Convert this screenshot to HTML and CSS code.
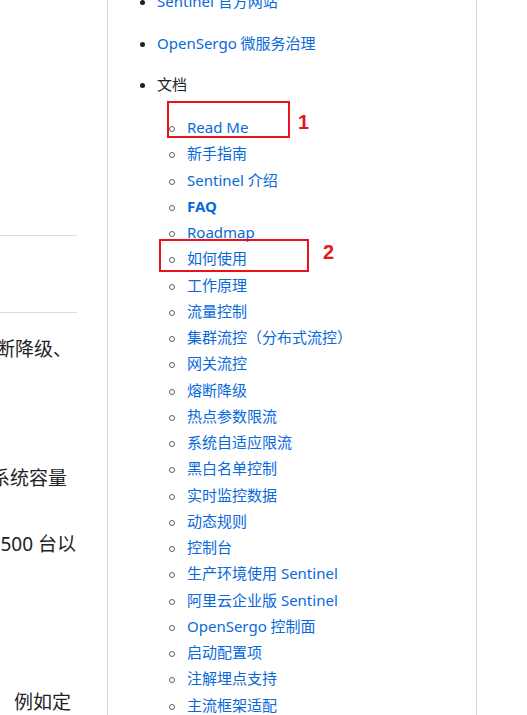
FILE: index.html
```html
<!DOCTYPE html>
<html lang="zh-CN">
<head>
<meta charset="utf-8">
<title>Sentinel 文档</title>
<link rel="stylesheet" href="styles.css">
</head>
<body>
<div class="page">
  <div class="main">
    <div class="rule rule-1"></div>
    <div class="rule rule-2"></div>
    <div class="line line-1"><span>流量路由、熔断降级、</span></div>
    <div class="line line-2"><span>突发流量控制在系统容量</span></div>
    <div class="line line-3"><span>数据，甚至 500 台以</span></div>
    <div class="line line-4"><span>例如定</span></div>
  </div>
  <aside class="toc">
    <ul class="toc-list">
      <li><a href="#">Sentinel 官方网站</a></li>
      <li><a href="#">OpenSergo 微服务治理</a></li>
      <li class="plain">文档
        <ul class="sub-list">
          <li><a href="#">Read Me</a></li>
          <li><a href="#">新手指南</a></li>
          <li><a href="#">Sentinel 介绍</a></li>
          <li><a href="#"><strong>FAQ</strong></a></li>
          <li><a href="#">Roadmap</a></li>
          <li><a href="#">如何使用</a></li>
          <li><a href="#">工作原理</a></li>
          <li><a href="#">流量控制</a></li>
          <li><a href="#">集群流控（分布式流控）</a></li>
          <li><a href="#">网关流控</a></li>
          <li><a href="#">熔断降级</a></li>
          <li><a href="#">热点参数限流</a></li>
          <li><a href="#">系统自适应限流</a></li>
          <li><a href="#">黑白名单控制</a></li>
          <li><a href="#">实时监控数据</a></li>
          <li><a href="#">动态规则</a></li>
          <li><a href="#">控制台</a></li>
          <li><a href="#">生产环境使用 Sentinel</a></li>
          <li><a href="#">阿里云企业版 Sentinel</a></li>
          <li><a href="#">OpenSergo 控制面</a></li>
          <li><a href="#">启动配置项</a></li>
          <li><a href="#">注解埋点支持</a></li>
          <li><a href="#">主流框架适配</a></li>
        </ul>
      </li>
    </ul>
  </aside>
  <div class="mark mark-1"></div>
  <div class="mark-label label-1">1</div>
  <div class="mark mark-2"></div>
  <div class="mark-label label-2">2</div>
</div>
</body>
</html>
```

FILE: styles.css
```css
html, body {
  margin: 0;
  padding: 0;
  background: #ffffff;
}

body {
  font-family: "Noto Sans", "Noto Sans CJK SC", sans-serif;
  color: #1f2328;
}

.page {
  display: flex;
  height: 715px;
  overflow: hidden;
  position: relative;
}

/* left content column (clipped) */
.main {
  width: 77px;
  flex: none;
  overflow: hidden;
  display: flex;
  flex-direction: column;
}

.rule {
  height: 1px;
  background: #d8dee4;
  flex: none;
}

.rule-1 { margin-top: 235px; }
.rule-2 { margin-top: 76px; }

.line {
  display: flex;
  justify-content: flex-end;
  white-space: nowrap;
  font-family: "Noto Sans", "Noto Sans CJK SC", sans-serif;
  font-size: 19px;
  line-height: 27px;
  color: #1f2328;
  flex: none;
}

.line-1 { margin-top: 23px; padding-right: 5px; }
.line-2 { margin-top: 102px; padding-right: 10px; }
.line-3 { margin-top: 39px; padding-right: 1px; }
.line-4 { margin-top: 131px; padding-right: 6px; }

/* right table of contents */
.toc {
  margin-left: 30px;
  width: 368px;
  flex: none;
  border-left: 1px solid #d0d7de;
  border-right: 1px solid #d0d7de;
  font-size: 15px;
  line-height: 26.25px;
}

.toc a {
  color: #0969da;
  text-decoration: none;
}

.toc-list {
  list-style: none;
  margin: -12px 0 0 0;
  padding: 0 0 0 49px;
}

.toc-list > li {
  margin-bottom: 15.25px;
}

.toc-list > li::before {
  content: "";
  display: inline-block;
  width: 5px;
  height: 5px;
  border-radius: 50%;
  background: #1f2328;
  margin-left: -17px;
  margin-right: 12px;
  vertical-align: middle;
}

.sub-list {
  list-style: none;
  margin: 16.8px 0 0 0;
  padding: 0 0 0 30px;
}

.sub-list > li::before {
  content: "";
  display: inline-block;
  box-sizing: border-box;
  width: 6px;
  height: 6px;
  border-radius: 50%;
  border: 1.3px solid #59636e;
  margin-left: -18px;
  margin-right: 12px;
  vertical-align: middle;
}

.sub-list strong {
  font-weight: 700;
}

/* red annotation overlays */
.mark {
  position: absolute;
  box-sizing: border-box;
  border: 2px solid #e8141c;
}

.mark-1 {
  left: 167px;
  top: 101px;
  width: 123px;
  height: 37px;
}

.mark-2 {
  left: 159px;
  top: 239px;
  width: 150px;
  height: 33px;
}

.mark-label {
  position: absolute;
  font-family: "Liberation Sans", Arial, sans-serif;
  font-weight: 700;
  font-size: 20px;
  line-height: 20px;
  color: #e8141c;
}

.label-1 { left: 298px; top: 112px; }
.label-2 { left: 323px; top: 242px; }
```
